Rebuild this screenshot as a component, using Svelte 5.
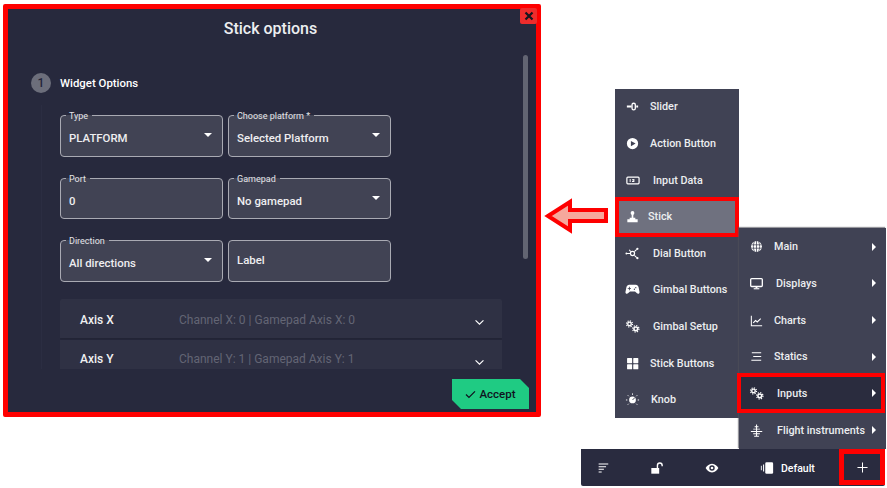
<script>
  const left = [
    { icon: 'slider', label: 'Slider', gap: 10 },
    { icon: 'play', label: 'Action Button', gap: 10 },
    { icon: 'input', label: 'Input Data', gap: 13 },
    { icon: 'stick', label: 'Stick', gap: 8, active: true },
    { icon: 'dial', label: 'Dial Button', gap: 13 },
    { icon: 'pad', label: 'Gimbal Buttons', gap: 13 },
    { icon: 'gears', label: 'Gimbal Setup', gap: 13 },
    { icon: 'grid', label: 'Stick Buttons', gap: 10 },
    { icon: 'knob', label: 'Knob', gap: 11 }
  ];
  const right = [
    { icon: 'globe', label: 'Main', gap: 10 },
    { icon: 'monitor', label: 'Displays', gap: 12 },
    { icon: 'chart', label: 'Charts', gap: 10 },
    { icon: 'lines', label: 'Statics', gap: 10 },
    { icon: 'gears', label: 'Inputs', gap: 13, active: true },
    { icon: 'flight', label: 'Flight instruments', gap: 13 }
  ];
</script>

{#snippet icon(name)}
  <svg class="ico" viewBox="0 0 16 16" fill="#fff" stroke="none">
    {#if name === 'slider'}
      <path d="M2 7h5v2H2zM12 7h2v2h-2z" /><rect x="7.500" y="4.500" width="3.500" height="7" rx="1.700" fill="none" stroke="#fff" stroke-width="1.400" />
    {:else if name === 'play'}
      <path fill-rule="evenodd" d="M8 2a6 6 0 1 0 0 12A6 6 0 0 0 8 2zM6.300 5.200 11.300 8l-5 2.800z" />
    {:else if name === 'input'}
      <rect x="2" y="4.500" width="13" height="7" rx="1" fill="none" stroke="#fff" stroke-width="1.300" /><path d="M5 6.500h1v3H5zM7.500 6.500h2.500v3H7.500v-1h1.500V8H8V7.500h1v-.2H7.500z" />
    {:else if name === 'stick'}
      <circle cx="8" cy="4.200" r="2" /><path d="M7.100 5h1.800v5H7.100zM5 9.300h6v1.500H5zM2.500 11h11v3h-11z" />
    {:else if name === 'dial'}
      <circle cx="8" cy="8" r="2.200" fill="none" stroke="#fff" stroke-width="1.300" /><path d="M1 8h4.500M10 6l2.500-2.500M10 10l2.500 2.500M6 6 4.500 4" stroke="#fff" stroke-width="1.100" /><circle cx="13.200" cy="3" r="1.200" /><circle cx="13.200" cy="13" r="1.200" /><circle cx="1.500" cy="8" r="1" />
    {:else if name === 'pad'}
      <path fill-rule="evenodd" d="M4.500 3h7c1.500 0 2.600 1 3 2.500l1 5.200c.3 1.800-1.800 2.600-3 1.100L10.700 10H5.300l-1.800 1.800c-1.200 1.500-3.300.7-3-1.100l1-5.200C1.900 4 3 3 4.500 3zM4.200 5v1.400H2.900v.9h1.300v1.400h.9V7.300h1.300v-.9H5.100V5zM11.500 5.300a.7.700 0 1 0 0 1.400.7.700 0 0 0 0-1.400zM10 7a.7.700 0 1 0 0 1.400A.7.700 0 0 0 10 7z" />
    {:else if name === 'gears'}
      <circle cx="4.800" cy="5.200" r="1.900" fill="none" stroke="#fff" stroke-width="1.500" /><circle cx="4.800" cy="5.200" r="3.200" fill="none" stroke="#fff" stroke-width="1.300" stroke-dasharray="1.300 1.210" /><circle cx="11.500" cy="10.500" r="2" fill="none" stroke="#fff" stroke-width="1.600" /><circle cx="11.500" cy="10.500" r="3.400" fill="none" stroke="#fff" stroke-width="1.300" stroke-dasharray="1.300 1.370" />
    {:else if name === 'grid'}
      <rect x="2.200" y="2.200" width="5.400" height="5.400" rx=".6" /><rect x="8.800" y="2.200" width="5.400" height="5.400" rx=".6" /><rect x="2.200" y="8.800" width="5.400" height="5.400" rx=".6" /><rect x="8.800" y="8.800" width="5.400" height="5.400" rx=".6" />
    {:else if name === 'knob'}
      <circle cx="8" cy="8.500" r="3.600" /><path d="M8 8.500 11 5.500" stroke="#404254" stroke-width="1" /><g stroke="#fff" stroke-width="1"><path d="M1 8.500h1.500M13.500 8.500H15M8 1.500v1.500M3 3.500l1 1M13 3.500l-1 1M3 13.500l1-1M13 13.500l-1-1" /></g>
    {:else if name === 'globe'}
      <circle cx="8" cy="8" r="5.800" /><path d="M2.500 6.200h11M2.500 9.800h11M8 2v12M5.800 2.500c-1.500 3.300-1.500 7.700 0 11M10.200 2.500c1.500 3.300 1.500 7.700 0 11" stroke="#404254" stroke-width=".8" fill="none" />
    {:else if name === 'monitor'}
      <rect x="1.800" y="2.800" width="12.400" height="8.400" rx="1" fill="none" stroke="#fff" stroke-width="1.400" /><path d="M5 13h6v1.200H5z" /><path d="M7 11h2v2H7z" />
    {:else if name === 'chart'}
      <path d="M2.500 3v10.500H14" fill="none" stroke="#fff" stroke-width="1.100" /><path d="M4.500 10.500 7 8l1.800 1.500L12.500 6" fill="none" stroke="#fff" stroke-width="1.200" />
    {:else if name === 'lines'}
      <path d="M3 3.500h10v1.100H3zM4.500 7.500H13v1.100H4.500zM2.500 11.500H13v1.100H2.500z" />
    {:else if name === 'flight'}
      <path d="M7.500 1.500h1.100v13H7.500zM6 3.500h4.100v1H6zM4.500 6h7.100v1H4.500zM2 8.500h12.100v1.100H2zM4.500 11h7.100v1H4.500zM5.500 13.500h5.100v1.100H5.500z" />
    {/if}
  </svg>
{/snippet}

{#snippet field(label, value, select)}
  <div class="field" class:plain={!label}>
    {#if label}<span class="legend">{label}</span>{/if}
    <span class="value">{value}</span>
    {#if select}<i class="caret"></i>{/if}
  </div>
{/snippet}

{#snippet row(item, arrow)}
  <div class="item" class:on={item.active}>
    {@render icon(item.icon)}
    <span class="name" style="margin-left: {item.gap}px">{item.label}</span>
    {#if arrow}<i class="tri"></i>{/if}
  </div>
{/snippet}

<div class="canvas">
  <section class="dialog">
    <button class="close" aria-label="Close">
      <svg viewBox="0 0 10 10" width="10" height="10"><path d="M1.500 1.500l7 7M8.500 1.500l-7 7" stroke="#15161f" stroke-width="2.200" /></svg>
    </button>
    <h1>Stick options</h1>
    <div class="step"><span class="num">1</span><span class="stepname">Widget Options</span></div>
    <div class="rail"></div>
    <div class="form">
      {@render field('Type', 'PLATFORM', true)}
      {@render field('Choose platform *', 'Selected Platform', true)}
      {@render field('Port', '0', false)}
      {@render field('Gamepad', 'No gamepad', true)}
      {@render field('Direction', 'All directions', true)}
      {@render field('', 'Label', false)}
    </div>
    <div class="accordion">
      <div class="acc first">
        <b>Axis X</b><span>Channel X: 0 | Gamepad Axis X: 0</span>
        <svg class="chev" viewBox="0 0 12 8" width="11" height="7"><path d="M1.500 1.500 6 6l4.500-4.500" fill="none" stroke="#fff" stroke-width="1.300" /></svg>
      </div>
      <div class="acc second">
        <b>Axis Y</b><span>Channel Y: 1 | Gamepad Axis Y: 1</span>
        <svg class="chev" viewBox="0 0 12 8" width="11" height="7"><path d="M1.500 1.500 6 6l4.500-4.500" fill="none" stroke="#fff" stroke-width="1.300" /></svg>
      </div>
    </div>
    <div class="scroll"></div>
    <button class="accept">
      <svg viewBox="0 0 12 10" width="11" height="9"><path d="M1 5l3.300 3.300L11 1.500" fill="none" stroke="#10131f" stroke-width="1.400" /></svg>
      Accept
    </button>
  </section>

  <svg class="arrow" viewBox="0 0 68 38" width="68" height="38">
    <path d="M5 18 27 4v8h36v11H27v9z" fill="#f6a89c" stroke="#fe0000" stroke-width="4" />
  </svg>

  <nav class="menu lefty">
    {#each left as item}{@render row(item, false)}{/each}
  </nav>
  <nav class="menu righty">
    {#each right as item}{@render row(item, true)}{/each}
  </nav>

  <footer class="bar">
    <svg class="bi" viewBox="0 0 16 16"><path d="M3 3.500h11M3 6.500h8.500M3 9.500h6M3 12.500h3.500" stroke="#fff" stroke-width="1.200" /></svg>
    <svg class="bi lock" viewBox="0 0 16 16"><path d="M1.500 8h9v6.500h-9z" fill="#fff" /><path d="M8.500 8V5a2.700 2.700 0 0 1 5.400 0v1" fill="none" stroke="#fff" stroke-width="1.600" /></svg>
    <svg class="bi eye" viewBox="0 0 16 16"><path fill-rule="evenodd" d="M8 3c3.500 0 6 2.700 7.300 5-1.300 2.300-3.800 5-7.300 5S2 10.300.7 8C2 5.700 4.500 3 8 3zM8 4.900a3.100 3.100 0 1 0 0 6.200 3.100 3.100 0 0 0 0-6.200z" fill="#fff" /><circle cx="8" cy="8" r="1.500" fill="#fff" /></svg>
    <div class="preset">
      <svg class="bi" viewBox="0 0 16 16"><path d="M1 5.500h1v5H1zM3.500 4h1.200v8H3.500z" fill="#fff" /><rect x="6" y="1.500" width="9" height="13" rx="1.500" fill="#fff" /></svg>
      <span>Default</span>
    </div>
    <div class="plus">
      <svg viewBox="0 0 12 12" width="11" height="11"><path d="M6 .5v11M.5 6h11" stroke="#fff" stroke-width="1.100" /></svg>
    </div>
  </footer>
</div>

<style>
  :global(body) { margin: 0; background: #fff; }
  .canvas {
    position: relative;
    width: 887px;
    height: 488px;
    overflow: hidden;
    background: #fff;
    font-family: Roboto, "Liberation Sans", sans-serif;
    color: #fff;
  }
  .dialog {
    position: absolute;
    left: 3px;
    top: 4px;
    width: 528px;
    height: 403px;
    border: 5px solid #fe0000;
    border-radius: 2px;
    background: #27293d;
  }
  .close {
    position: absolute;
    right: -1px;
    top: -1px;
    width: 17px;
    height: 16px;
    padding: 0;
    border: 0;
    border-radius: 2px;
    background: #ee2c2c;
    display: flex;
    align-items: center;
    justify-content: center;
  }
  h1 {
    margin: 0;
    padding: 10px 3px 0 0;
    height: 26px;
    line-height: 19px;
    font-size: 16px;
    font-weight: 500;
    text-align: center;
    color: #eceef0;
  }
  .step {
    display: flex;
    align-items: center;
    margin: 28px 0 0 23px;
    height: 20px;
  }
  .num {
    width: 20px;
    height: 20px;
    border-radius: 50%;
    background: #6c6e7b;
    color: #23253a;
    font-size: 12px;
    font-weight: 500;
    text-align: center;
    line-height: 20px;
  }
  .stepname { margin-left: 9px; font-size: 11.400px; font-weight: 500; }
  .rail {
    position: absolute;
    left: 33px;
    top: 96px;
    width: 1px;
    height: 264px;
    background: #2b2d42;
  }
  .form {
    display: grid;
    grid-template-columns: 163px 163px;
    grid-auto-rows: 41.500px;
    column-gap: 5px;
    row-gap: 21px;
    margin: 22px 0 0 52px;
  }
  .field {
    position: relative;
    box-sizing: border-box;
    border: 1px solid #a9aab3;
    border-radius: 4px;
    background: #414354;
    padding: 15px 8px 0;
  }
  .field.plain { padding-top: 12px; }
  .legend {
    position: absolute;
    left: 5px;
    top: -5px;
    padding: 0 4px 0 3px;
    font-size: 9px;
    line-height: 10px;
    color: #e4e4e8;
    background: linear-gradient(#27293d 40%, #414354 40%);
  }
  .value { font-size: 11.400px; font-weight: 500; line-height: 14px; color: #eeeef0; display: block; }
  .caret {
    position: absolute;
    right: 10px;
    top: 17px;
    border-left: 4px solid transparent;
    border-right: 4px solid transparent;
    border-top: 4px solid #fff;
  }
  .accordion {
    margin: 17px 0 0 52px;
    width: 442px;
    height: 70px;
    overflow: hidden;
    border-radius: 2px 2px 0 0;
  }
  .acc {
    position: relative;
    box-sizing: border-box;
    height: 39px;
    padding-left: 20px;
    display: flex;
    align-items: center;
    background: #2f3144;
    box-shadow: 0 1px 2px rgba(0,0,0,.18);
  }
  .first { padding-top: 3px; }
  .first .chev { top: 20px; }
  .second { margin-top: 2px; height: 38px; }
  .second .chev { top: 19px; }
  .acc b { width: 99px; font-size: 12px; font-weight: 500; color: #f0f0f2; }
  .acc span { font-size: 12px; color: #636574; }
  .chev { position: absolute; right: 17px; }
  .scroll {
    position: absolute;
    left: 515px;
    top: 46px;
    width: 5px;
    height: 204px;
    border-radius: 3px;
    background: #626472;
  }
  .accept {
    position: absolute;
    left: 444px;
    top: 370px;
    width: 77px;
    height: 30px;
    padding: 0;
    border: 0;
    background: #1fcb83;
    clip-path: polygon(0 0, 68px 0, 100% 9px, 100% 100%, 9px 100%, 0 21px);
    font: 500 11.500px Roboto, sans-serif;
    color: #10131f;
    display: flex;
    align-items: center;
    justify-content: center;
    gap: 3px;
  }
  .arrow { position: absolute; left: 543px; top: 198px; }
  .menu { position: absolute; display: flex; flex-direction: column; background: #404254; }
  .lefty { left: 615px; top: 89px; width: 124px; height: 329px; }
  .righty { left: 739px; top: 228px; width: 147px; height: 221px; padding-top: .5px; box-sizing: border-box; box-shadow: -1px -1px 1px rgba(80,80,90,.6); }
  .item {
    position: relative;
    flex: none;
    height: 36.650px;
    box-sizing: border-box;
    display: flex;
    align-items: center;
    padding-left: 10px;
    font-size: 10.800px;
    font-weight: 500;
    color: #eceef0;
  }
  .lefty .item:first-child { margin-top: -.6px; }
  .item .ico { width: 15px; height: 15px; flex: none; }
  .lefty .item.on { background: #6f717f; border: 4px solid #fe0000; padding-left: 6px; height: 40px; margin: -1.700px 0; }
  .righty .item.on { background: #2a2c3e; border: 4px solid #fe0000; padding-left: 8px; height: 40px; margin: -1.700px 1px -1.700px -2px; }
  .tri {
    position: absolute;
    right: 10px;
    top: 50%;
    margin-top: -4px;
    border-top: 4px solid transparent;
    border-bottom: 4px solid transparent;
    border-left: 4px solid #fff;
  }
  .on .tri { right: 5px; }
  .bar {
    position: absolute;
    left: 581px;
    top: 449px;
    width: 304px;
    height: 37px;
    box-sizing: border-box;
    background: #292b3f;
    border-radius: 0 0 2px 2px;
    display: flex;
    align-items: center;
  }
  .bi { width: 14px; height: 14px; flex: none; }
  .bar > .bi:first-child { margin-left: 15px; }
  .lock { margin-left: 40px; }
  .eye { margin-left: 41px; }
  .preset { display: flex; align-items: center; margin-left: 41px; gap: 7px; font-size: 10.500px; font-weight: 500; }
  .preset span { padding-top: 1px; }
  .plus {
    position: absolute;
    right: 0;
    top: 0;
    box-sizing: border-box;
    width: 46px;
    height: 36px;
    border: 5px solid #fe0000;
    display: flex;
    align-items: center;
    justify-content: center;
  }
</style>
